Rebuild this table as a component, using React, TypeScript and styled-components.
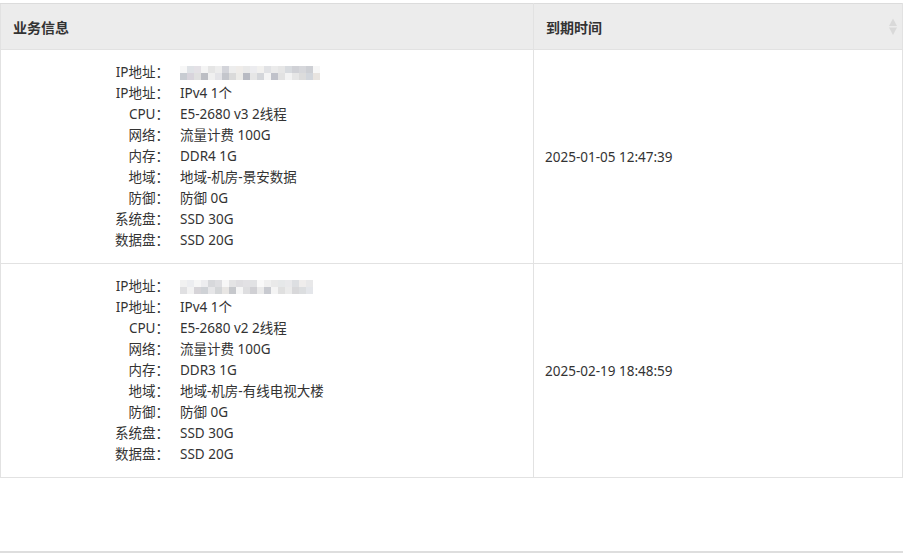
import React from "react";
import styled, { createGlobalStyle } from "styled-components";

const Global = createGlobalStyle`
  html, body { margin: 0; padding: 0; background: #fff; }
  body { font-family: "Noto Sans", "Noto Sans CJK SC", sans-serif; color: #333; }
`;

const Page = styled.div`
  width: 903px;
  height: 553px;
  padding-top: 3px;
  box-sizing: border-box;
  display: flex;
  flex-direction: column;
`;

const Table = styled.table`
  width: 100%;
  border-collapse: collapse;
  table-layout: fixed;
  font-size: 13.5px;
  border: 1px solid #dcdcdc;
`;

const HeadCell = styled.th<{ $w?: number }>`
  ${(p) => (p.$w ? `width: ${p.$w}px;` : "")}
  height: 45px;
  padding: 0 12px;
  background: #ececec;
  text-align: left;
  font-weight: 700;
  font-size: 14px;
  color: #333;
  border: 1px solid #e2e2e2;
  border-top-color: #dcdcdc;
  position: relative;
`;

const SortIcon = styled.span`
  position: absolute;
  right: 5px;
  top: 50%;
  transform: translateY(-50%);
  display: flex;
`;

const Cell = styled.td<{ $pad?: string }>`
  border: 1px solid #e2e2e2;
  padding: ${(p) => p.$pad || "0 11px"};
  vertical-align: middle;
  color: #333;
`;

const Info = styled.div`
  display: grid;
  grid-template-columns: 168px auto;
  column-gap: 11px;
  line-height: 21px;
`;

const Label = styled.span`
  text-align: right;
  white-space: nowrap;
`;

const Value = styled.span`
  white-space: nowrap;
  display: flex;
  align-items: center;
`;

const Spacer = styled.div`
  flex: 1;
`;

const Footer = styled.div`
  height: 0;
  border-top: 2px solid #dedede;
`;

const palettes = [
  ["#f3f3f3", "#e6e6e6", "#dcdcdc", "#d2d6dc", "#e8e4e0", "#c8ccd2", "#d8d4dc", "#e0e0e0", "#bcbec4", "#f0f0f0", "#e4e4e8", "#c4c6cc", "#dadada", "#ecebe8", "#b8bac2", "#e6e6e6", "#d4d6da", "#f4f4f4", "#c0c2ca", "#e2e2e2"],
  ["#ebebeb", "#d8d8da", "#dcdee0", "#e4e6ea", "#d2d0d4", "#e0e0e2", "#f2f2f2", "#d6d4d8", "#cfd2d6", "#e6e6e8", "#d4d6d8", "#e8e6e4", "#c6c8cc", "#f6f6f6", "#dedee0", "#d0d0d4", "#eaeaea", "#c8cad0", "#f4f4f4", "#e0e0e0"],
];

function Blur({ variant }: { variant: number }) {
  const p = palettes[variant];
  const cols = variant === 0 ? 20 : 19;
  const cells: React.ReactNode[] = [];
  for (let r = 0; r < 2; r++) {
    for (let c = 0; c < cols; c++) {
      const col = p[(c * 3 + r * 7) % p.length];
      cells.push(<rect key={`${r}-${c}`} x={c * 7} y={r * 7} width={7} height={7} fill={r === 0 ? col : p[(c + 5) % p.length]} opacity={r === 0 ? 0.7 : 1} />);
    }
  }
  return (
    <svg width={cols * 7} height={14} style={{ display: "block" }}>
      {cells}
    </svg>
  );
}

type Server = {
  blur: number;
  cpu: string;
  mem: string;
  region: string;
  date: string;
};

const servers: Server[] = [
  { blur: 0, cpu: "E5-2680 v3 2线程", mem: "DDR4 1G", region: "地域-机房-景安数据", date: "2025-01-05 12:47:39" },
  { blur: 1, cpu: "E5-2680 v2 2线程", mem: "DDR3 1G", region: "地域-机房-有线电视大楼", date: "2025-02-19 18:48:59" },
];

export default function App() {
  return (
    <Page>
      <Global />
      <Table>
        <thead>
          <tr>
            <HeadCell $w={508}>业务信息</HeadCell>
            <HeadCell>
              到期时间
              <SortIcon>
                <svg width="8" height="17" viewBox="0 0 8 17">
                  <path d="M4 0 L8 7.5 L0 7.5 Z" fill="#d9d9d9" />
                  <path d="M0 9 L8 9 L4 16.5 Z" fill="#d9d9d9" />
                </svg>
              </SortIcon>
            </HeadCell>
          </tr>
        </thead>
        <tbody>
          {servers.map((s, i) => (
            <tr key={i}>
              <Cell $pad="12px 0 12px 0">
                <Info>
                  <Label>IP地址：</Label>
                  <Value><Blur variant={s.blur} /></Value>
                  <Label>IP地址：</Label>
                  <Value>IPv4 1个</Value>
                  <Label>CPU：</Label>
                  <Value>{s.cpu}</Value>
                  <Label>网络：</Label>
                  <Value>流量计费 100G</Value>
                  <Label>内存：</Label>
                  <Value>{s.mem}</Value>
                  <Label>地域：</Label>
                  <Value>{s.region}</Value>
                  <Label>防御：</Label>
                  <Value>防御 0G</Value>
                  <Label>系统盘：</Label>
                  <Value>SSD 30G</Value>
                  <Label>数据盘：</Label>
                  <Value>SSD 20G</Value>
                </Info>
              </Cell>
              <Cell>{s.date}</Cell>
            </tr>
          ))}
        </tbody>
      </Table>
      <Spacer />
      <Footer />
    </Page>
  );
}
